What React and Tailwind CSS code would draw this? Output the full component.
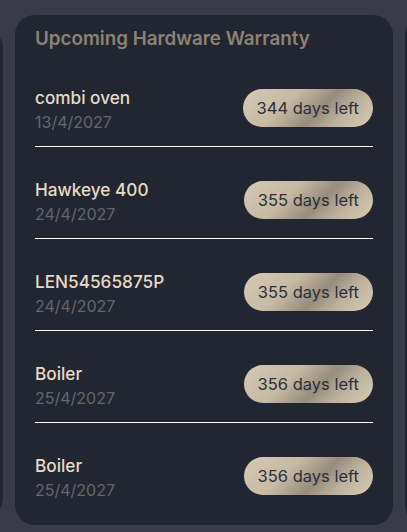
const items = [
  { name: "combi oven", date: "13/4/2027", days: 344 },
  { name: "Hawkeye 400", date: "24/4/2027", days: 355 },
  { name: "LEN54565875P", date: "24/4/2027", days: 355 },
  { name: "Boiler", date: "25/4/2027", days: 356 },
  { name: "Boiler", date: "25/4/2027", days: 356 },
]

function DaysPill({ days }) {
  return (
    <span className="shrink-0 mb-1 rounded-full h-[38px] px-[14px] flex items-center text-[16.5px] text-[#2b2f38] bg-[linear-gradient(135deg,#d6c9b3_0%,#c7baa4_35%,#978c7d_58%,#bdb19d_75%,#d8ccb6_100%)]">
      {days} days left
    </span>
  )
}

function WarrantyCard() {
  return (
    <div className="shrink-0 w-[378px] h-[510px] rounded-[20px] bg-[#222630] px-5 pt-[10px]">
      <h2 className="text-[18.8px] leading-7 font-semibold text-[#8c8275]">Upcoming Hardware Warranty</h2>
      <div className="mt-[33px] flex flex-col gap-[31px]">
        {items.map((it, i) => (
          <div
            key={i}
            className={
              "flex items-center justify-between " +
              (i < items.length - 1 ? "pb-3 border-b border-white" : "")
            }
          >
            <div className="flex flex-col leading-6">
              <span className="text-[17.2px] font-medium text-[#e6dbc7]">{it.name}</span>
              <span className="text-[16px] text-[#62666e]">{it.date}</span>
            </div>
            <DaysPill days={it.days} />
          </div>
        ))}
      </div>
    </div>
  )
}

export default function App() {
  return (
    <div className="w-full h-[532px] overflow-hidden bg-[#393c46] flex gap-3 py-[15px] font-['Inter',sans-serif]">
      <div className="shrink-0 w-[378px] h-[490px] mt-[13px] ml-[-375px] rounded-[20px] bg-[#222630]" />
      <WarrantyCard />
      <div className="shrink-0 w-[378px] h-[510px] rounded-[20px] bg-[#222630]" />
    </div>
  )
}
